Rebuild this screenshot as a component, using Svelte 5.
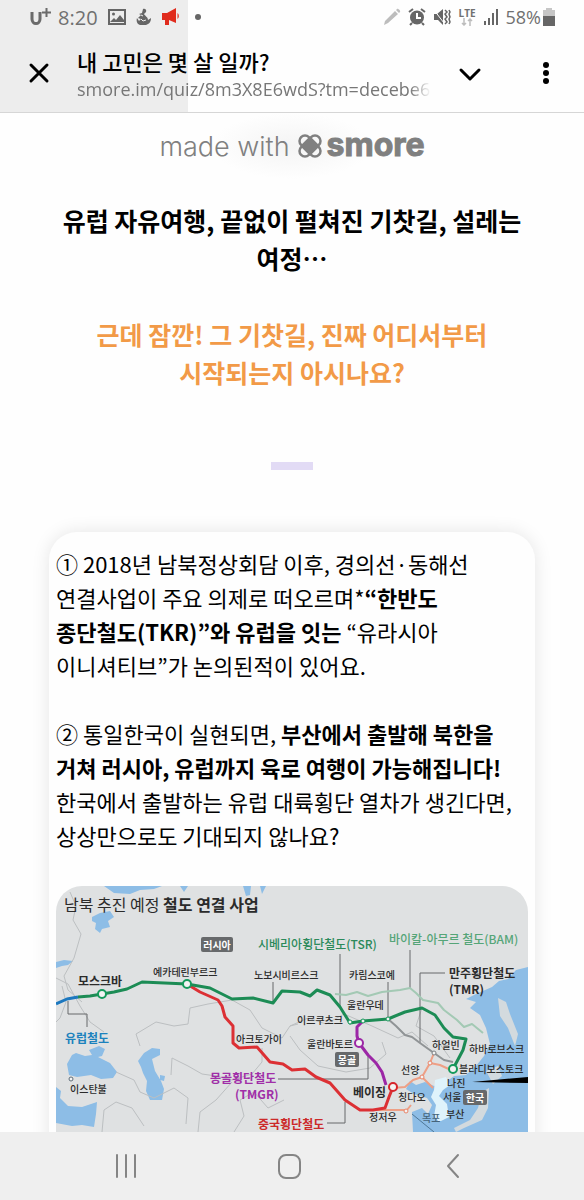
<script>
    const page = {
        title: "내 고민은 몇 살 일까?",
        url: "smore.im/quiz/8m3X8E6wdS?tm=decebe69",
        loaded: 32.2
    };

    const borders = [
        "M14 6 20 20 17 34 25 48 18 72 8 90 12 104 26 116",
        "M0 92 12 98 24 120 34 136 48 146",
        "M6 100 10 116 4 132 0 136",
        "M84 160 80 148 100 136 118 140 132 138 134 122 152 118 176 114 194 124 206 142 226 152 234 140 242 138",
        "M115 189 116 172 132 180 146 188 160 190 176 194 196 188 206 176 206 162",
        "M60 186 78 194 84 206 98 212 118 202 132 212 130 238",
        "M46 246 48 224 60 216 76 222 88 240",
        "M142 246 144 226 160 214 176 196",
        "M178 246 188 230 184 214 198 206 212 222 228 214",
        "M234 150 244 164 262 180 290 186 314 182 330 168 326 156",
        "M234 140 252 132 270 138 288 128 316 140 342 152 356 146 372 160",
        "M366 122 360 140 378 150 394 172"
    ];

    const routes = [
        { kind: "guide", d: "M12 115V128H31V141 M217 96V118 M284 68V122 M354 64V103 M332 96V133 M389 87H364V157 M222 193H312V169 M271 237H289V216" },
        { kind: "bam", d: "M279 108 290 109 301 106 312 110 326 106 344 104 354 102 360 107 367 114 382 117 388 124 401 134 408 141 416 138 427 147" },
        { kind: "tmr", d: "M332 133 340 140 349 149 356 151 364 157 378 167 388 174 397 176" },
        { kind: "korea", d: "M337 202 349 201 357 194 366 191 374 177 378 167 M374 177 384 179 397 185 M366 191 377 202 M317 224 351 224 355 219" },
        { kind: "tmgr", d: "M306 136 301 141 301 150 303 157 312 169 320 177 326 186 330 199" },
        { kind: "tcr", d: "M131 98 144 106 162 114 166 120 169 131 177 140 177 157 183 162 201 161 214 176 227 178 236 184 249 183 260 191 274 197 289 214 304 224 317 224 329 222 333 211 337 201" },
        { kind: "europe", d: "M0 118 11 113 22 111" },
        { kind: "tsr", d: "M22 111 34 110 46 108 58 106 71 103 86 96 131 98 154 102 176 113 197 112 217 117 226 105 244 106 254 110 261 104 274 109 284 121 294 137 307 135 332 133 349 126 366 122 379 129 388 142 397 151 410 153 407 164 397 183" }
    ];

    const stops = [
        { x: 46, y: 108, r: 4, color: "#159a5b" },
        { x: 131, y: 98, r: 4, color: "#159a5b" },
        { x: 303, y: 157, r: 4, color: "#9c27a6" },
        { x: 337, y: 201, r: 4, color: "#d6252b" },
        { x: 397, y: 183, r: 4, color: "#159a5b" },
        { x: 294, y: 136, r: 2, color: "#159a5b" },
        { x: 307, y: 135, r: 2, color: "#159a5b" },
        { x: 332, y: 133, r: 2, color: "#159a5b" },
        { x: 378, y: 167, r: 2, color: "#7d8184" },
        { x: 374, y: 177, r: 2, color: "#e98468" },
        { x: 366, y: 191, r: 2, color: "#e98468" },
        { x: 350, y: 225, r: 2, color: "#e98468" },
        { x: 15, y: 193, r: 2, color: "#5e6d78" }
    ];

    const labels = [
        { x: 202, y: 63, text: "시베리아횡단철도(TSR)", kind: "line green" },
        { x: 333, y: 58, text: "바이칼-아무르 철도(BAM)", kind: "line lime" },
        { x: 393, y: 92, text: "만주횡단철도", kind: "line" },
        { x: 393, y: 108, text: "(TMR)", kind: "line" },
        { x: 9, y: 157, text: "유럽철도", kind: "line blue" },
        { x: 154, y: 197, text: "몽골횡단철도", kind: "line purple" },
        { x: 179, y: 213, text: "(TMGR)", kind: "line purple" },
        { x: 202, y: 243, text: "중국횡단철도", kind: "line red" },
        { x: 22, y: 100, text: "모스크바", kind: "line" },
        { x: 297, y: 211, text: "베이징", kind: "line" },
        { x: 97, y: 90, text: "예카테린부르크" },
        { x: 198, y: 93, text: "노보시비르스크" },
        { x: 293, y: 93, text: "카림스코예" },
        { x: 291, y: 123, text: "울란우데" },
        { x: 241, y: 138, text: "이르쿠츠크" },
        { x: 251, y: 162, text: "울란바토르" },
        { x: 376, y: 163, text: "하얼빈" },
        { x: 413, y: 167, text: "하바로브스크" },
        { x: 403, y: 187, text: "블라디보스토크" },
        { x: 345, y: 188, text: "선양" },
        { x: 391, y: 201, text: "나진" },
        { x: 387, y: 215, text: "서울" },
        { x: 390, y: 232, text: "부산" },
        { x: 366, y: 236, text: "목포", kind: "faint" },
        { x: 342, y: 215, text: "칭다오" },
        { x: 313, y: 235, text: "정저우" },
        { x: 14, y: 207, text: "이스탄불" },
        { x: 180, y: 157, text: "아크토가이" }
    ];

    const countries = [
        { x: 145, y: 51, width: 32, text: "러시아" },
        { x: 279, y: 166, width: 24, text: "몽골" },
        { x: 407, y: 204, width: 24, text: "한국" }
    ];
</script>

<div class="screen">
    <header style:background-size="{page.loaded}% 100%">
        <div class="status">
            <svg width="23" height="20" viewBox="0 0 23 20" aria-label="U+">
                <path d="M3 5v7a3.500 4 0 0 0 8 0V5" fill="none" stroke="#6b6b6b" stroke-width="3" />
                <path d="M17.500 1v9M13 5.500h9" stroke="#6b6b6b" stroke-width="2" />
            </svg>
            <span class="clock">8:20</span>
            <svg class="picture" width="18" height="18" viewBox="0 0 18 18">
                <path fill="#666" fill-rule="evenodd" d="M0 1h18v16H0zM2 3v12h14V3z" />
                <circle cx="5.500" cy="6" r="1.500" fill="#666" />
                <path d="m2 14 4-4 2 2 4-5 4 5v2z" fill="#666" />
            </svg>
            <svg class="app" width="15" height="18" viewBox="0 0 15 18">
                <path fill="#666" d="M7 1c2-1 4 1 3 3L8 6c1 2 4 3 4 6l3-2c0 4-2 6-5 7H4c-3-1-4-4-3-7l2 3 2-2-3-1 3-3-2-1 3-1z" />
                <path d="m5 11 2 2 3-1M5 7l2 1" stroke="#eee" fill="none" />
            </svg>
            <svg class="horn" width="19" height="18" viewBox="0 0 19 18">
                <path fill="#e02b1d" d="M0 5h5l9-5v15l-7-3v5H3v-5H0z" />
                <path fill="#e02b1d" d="M15.500 5a4 4 0 0 1 0 6z" />
            </svg>
            <i class="more"></i>
            <div class="system">
                <svg width="18" height="18" viewBox="0 0 18 18">
                    <path fill="#bdbdbd" d="m1 17 1-4L12 3l3 3L5 15zM13 2l1-1c1-1 4 2 3 3l-1 1z" />
                </svg>
                <svg width="18" height="18" viewBox="0 0 18 18">
                    <circle cx="9" cy="9.500" r="7" fill="#666" />
                    <path d="M1 4l4-3M17 4l-4-3M4 15l-2 2M14 15l2 2" stroke="#666" stroke-width="2" />
                    <path d="M9 5v5h4" fill="none" stroke="#fff" stroke-width="2" />
                </svg>
                <svg width="18" height="18" viewBox="0 0 18 18">
                    <path fill="#666" d="M1 6h3l6-5v16l-5-5H1z" />
                    <path d="m1 2 10 13" stroke="#fff" />
                    <path d="m12 2 2 2-2 2 2 3-2 2 2 3-2 2M16 2l1 2-1 2 1 3-1 2 1 3-1 2" fill="none" stroke="#666" stroke-width="1.500" />
                </svg>
                <span class="network">
                    LTE
                    <svg width="12" height="8" viewBox="0 0 12 8">
                        <path d="M3 0v7M1 5l2 2 2-2M9 8V1M7 3l2-2 2 2" fill="none" stroke="#bdbdbd" stroke-width="1.500" />
                    </svg>
                </span>
                <svg width="16" height="18" viewBox="0 0 16 18">
                    <path d="M2 13v4M6 10v7M10 5v12M14 1v16" stroke="#666" stroke-width="2" />
                </svg>
                <span class="battery">
                    58%
                    <svg width="12" height="18" viewBox="0 0 12 18">
                        <path fill="#c6c6c6" d="M3 0h6v2h3v6H0V2h3z" />
                        <path fill="#666" d="M0 8h12v10H0z" />
                    </svg>
                </span>
            </div>
        </div>

        <div class="toolbar">
            <button aria-label="닫기">
                <svg width="22" height="22" viewBox="0 0 22 22">
                    <path d="m3 3 16 16M19 3 3 19" stroke="#000" stroke-width="3" stroke-linecap="round" />
                </svg>
            </button>
            <div class="address">
                <h1>{page.title}</h1>
                <p>{page.url}</p>
            </div>
            <button aria-label="펼치기">
                <svg width="24" height="22" viewBox="0 0 24 22">
                    <path d="m3 8 9 9 9-9" fill="none" stroke="#000" stroke-width="3" stroke-linecap="round" stroke-linejoin="round" />
                </svg>
            </button>
            <button class="menu" aria-label="메뉴">
                <svg width="10" height="24" viewBox="0 0 10 24">
                    <circle cx="5" cy="4" r="3" />
                    <circle cx="5" cy="12" r="3" />
                    <circle cx="5" cy="20" r="3" />
                </svg>
            </button>
        </div>
    </header>

    <main>
        <div class="brand">
            <span>made with</span>
            <svg width="26" height="26" viewBox="0 0 26 26" fill="none" stroke="#808080" stroke-width="2.500">
                <circle cx="8" cy="8" r="5.500" />
                <circle cx="18" cy="8" r="5.500" />
                <circle cx="8" cy="18" r="5.500" />
                <circle cx="18" cy="18" r="5.500" />
                <path d="m13 5 8 8-8 8-8-8z" fill="#808080" stroke-linejoin="round" />
            </svg>
            <strong>smore</strong>
        </div>

        <h2>유럽 자유여행, 끝없이 펼쳐진 기찻길, 설레는 여정…</h2>
        <h2 class="question">근데 잠깐! 그 기찻길, 진짜 어디서부터 시작되는지 아시나요?</h2>

        <div class="divider"></div>

        <article>
            <p>
                ① 2018년 남북정상회담 이후, 경의선·동해선 <br />
                연결사업이 주요 의제로 떠오르며*<b>“한반도</b><br />
                <b>종단철도(TKR)”와 유럽을 잇는</b> “유라시아<br />
                이니셔티브”가 논의된적이 있어요.
            </p>
            <p>
                ② 통일한국이 실현되면, <b>부산에서 출발해 북한을</b><br />
                <b>거쳐 러시아, 유럽까지 육로 여행이 가능해집니다!</b><br />
                한국에서 출발하는 유럽 대륙횡단 열차가 생긴다면, 상상만으로도 기대되지 않나요?
            </p>

            <svg class="map" viewBox="0 0 472 300" role="img" aria-label="남북 추진 예정 철도 연결 사업">
                <rect width="472" height="300" fill="#dfe1e2" />

                <g class="water">
                    <path d="M48 0 58 7 74 8 84 4 98 3 106 0zM124 0l4 6 4-6zM187 0l3 10 4-1 1-9zM204 0l2 8 4-8z" />
                    <path d="m36 31 8-4 10-2 4 6-6 4 2 6-8 2-2 4-5-4 1-6-4-2z" />
                    <path d="M0 76 8 74 17 75 12 79 6 80 0 82z" />
                    <path d="m11 178 5-9 4-2 9 3 7-1-3-5 10-4 6 3-3 7-4 1 12 6 7 9-4 6-12 1-10-4-14 2-8-2z" />
                    <path d="m82 175 6-8 8-5 8 1v6l-8 4 3 12 6 10 3 8-2 11H94l-4-9 1-10-4-8-2-6z" />
                    <path d="m104 189 5 1-1 5-4-1z" />
                    <path d="m0 201 5 4-1 7 8 8 14 1 15-5-1 12-2 13-12-2-10 1-16-3z" />
                    <path d="M472 81 460 84 452 93 443 95 436 101 420 108 410 113 420 116 414 122 424 129 430 142 434 158 428 170 420 180 410 189 398 190 390 196 378 200 369 196 360 199 354 195 350 203 358 208 371 212 376 219 372 228 366 222 356 226 357 246 362 300H472z" />
                </g>
                <path class="korea-land" d="m379 194 11-3 4 8-7 5-4 6 8 8 2 13-10 5-5-6 2-11-5-8 3-7z" />
                <path class="land" d="m442 112 8 4 4 12 8 20-3 12-7-18-8-12z" />
                <path class="land" d="m430 185 12-5 4 10-9 8zM426 206l7-4-1 20-6 12-18 8-8 4-2-4 16-8 8-12z" />

                <g class="borders">
                    {#each borders as d}
                        <path {d} />
                    {/each}
                </g>

                {#each routes as route}
                    <path class="route {route.kind}" d={route.d} />
                {/each}
                <path d="m416 196 56-5v6z" />
                <path d="m356 228 22 18" stroke="#4f7796" />

                {#each stops as stop}
                    <circle cx={stop.x} cy={stop.y} r={stop.r} fill="#f3f3f3" stroke={stop.color} stroke-width={stop.r / 2} />
                {/each}

                {#each countries as country}
                    <rect x={country.x} y={country.y} width={country.width} height="15" rx="2" fill="#67696b" />
                    <text class="country" x={country.x + country.width / 2} y={country.y + 12}>{country.text}</text>
                {/each}

                {#each labels as label}
                    <text class={label.kind} x={label.x} y={label.y}>{label.text}</text>
                {/each}
                <text class="caption" x="8" y="25">남북 추진 예정 <tspan>철도 연결 사업</tspan></text>
            </svg>
        </article>
    </main>

    <nav>
        <button aria-label="최근 앱">
            <svg width="24" height="28" viewBox="0 0 24 28">
                <path d="M3 3v22M12 3v22M21 3v22" />
            </svg>
        </button>
        <button aria-label="홈">
            <svg width="28" height="28" viewBox="0 0 28 28">
                <rect x="4" y="3" width="21" height="23" rx="7" />
            </svg>
        </button>
        <button aria-label="뒤로">
            <svg width="20" height="28" viewBox="0 0 20 28">
                <path d="M16 3 6 14l10 11" />
            </svg>
        </button>
    </nav>
</div>

<style>
    :global(body) {
        margin: 0;
        background: #fefefe;
    }

    .screen {
        display: flex;
        flex-direction: column;
        height: 100vh;
        overflow: hidden;
        color: #000;
        font-family: "Noto Sans CJK KR", sans-serif;
        word-break: keep-all;
    }

    svg {
        display: block;
        flex-shrink: 0;
    }

    button {
        display: flex;
        align-items: center;
        justify-content: center;
        padding: 0;
        border: none;
        background: none;
        cursor: pointer;
    }

    header {
        flex-shrink: 0;
        border-bottom: 1px solid #d6d6d6;
        background: linear-gradient(#ededed, #ededed) no-repeat #fefefe;
    }

    .status {
        display: flex;
        align-items: center;
        height: 34px;
        padding: 0 29px;
        color: #707070;
    }

    .clock,
    .battery {
        font-family: "Open Sans", sans-serif;
        font-size: 20px;
        font-weight: 400;
    }

    .clock {
        margin-left: 6px;
    }

    .picture {
        margin-left: 10px;
    }

    .app {
        margin-left: 10px;
    }

    .horn {
        margin-left: 11px;
    }

    .more {
        width: 6px;
        height: 6px;
        margin-left: 14px;
        border-radius: 50%;
        background: #666;
    }

    .system {
        display: flex;
        align-items: center;
        gap: 7px;
        margin-left: auto;
    }

    .network {
        display: flex;
        flex-direction: column;
        align-items: center;
        font: 700 10px/10px "Open Sans", sans-serif;
    }

    .battery {
        display: flex;
        align-items: center;
        gap: 2px;
        font-size: 18px;
    }

    .toolbar {
        display: flex;
        align-items: center;
        height: 78px;
        padding: 0 33px 0 28px;
    }

    .address {
        flex: 1;
        min-width: 0;
        margin: 0 27px;
        padding-top: 4px;
    }

    .address h1,
    .address p {
        margin: 0;
        overflow: hidden;
        line-height: 28px;
        white-space: nowrap;
    }

    .address h1 {
        font-size: 22px;
        font-weight: 500;
    }

    .address p {
        color: #777;
        font-family: "Open Sans", sans-serif;
        font-size: 18px;
        mask-image: linear-gradient(to right, #000 94%, transparent);
    }

    .menu {
        margin-left: 59px;
    }

    main {
        flex: 1;
        min-height: 0;
        padding: 0 49px;
        overflow-y: auto;
        scrollbar-width: none;
    }

    .brand {
        display: flex;
        align-items: center;
        justify-content: center;
        height: 66px;
        margin-bottom: 22px;
        background: radial-gradient(closest-side, #f4f4f4, transparent) no-repeat center / 160px 66px;
        color: #808080;
        font-family: Inter, sans-serif;
    }

    .brand span {
        margin-right: 7px;
        font-size: 27px;
        font-weight: 300;
    }

    .brand strong {
        margin: 0 0 4px 4px;
        font-size: 32px;
        font-weight: 700;
        -webkit-text-stroke: 1px #808080;
    }

    h2 {
        margin: 0 0 38px;
        font-size: 25px;
        font-weight: 700;
        line-height: 38px;
        text-align: center;
    }

    .question {
        color: #f29a47;
    }

    .divider {
        width: 42px;
        height: 8px;
        margin: 71px auto 62px;
        background: #e2dbf5;
    }

    article {
        padding: 14px 7px;
        border-radius: 28px;
        background: #fefefe;
        box-shadow: 0 0 18px rgba(0, 0, 0, 0.1);
    }

    article p {
        margin: 0 0 34px;
        font-size: 22px;
        line-height: 34px;
    }

    .map {
        width: 100%;
        border-radius: 26px;
    }

    .map text {
        fill: #2b2b2b;
        font-size: 10px;
        font-weight: 500;
    }

    .map .line {
        font-size: 12px;
        font-weight: 700;
    }

    .map .green {
        fill: #2b8a5a;
        font-weight: 500;
    }

    .map .lime {
        fill: #55a578;
        font-weight: 500;
    }

    .map .blue {
        fill: #1c82bd;
    }

    .map .purple {
        fill: #a02fa8;
    }

    .map .red {
        fill: #cc2a2a;
    }

    .map .faint {
        fill: #46657c;
    }

    .map .country {
        fill: #fff;
        font-weight: 700;
        text-anchor: middle;
    }

    .map .caption {
        font-size: 16px;
        font-weight: 400;
    }

    .caption tspan {
        font-weight: 700;
    }

    .water {
        fill: #8dbde6;
    }

    .land {
        fill: #d3dade;
    }

    .korea-land {
        fill: #dff3fb;
    }

    .borders {
        fill: none;
        stroke: #bcbfc1;
    }

    .route {
        fill: none;
        stroke-width: 3;
        stroke-linejoin: round;
    }

    .guide {
        stroke: #66696b;
        stroke-width: 1;
    }

    .bam {
        stroke: #a3c9b4;
        stroke-width: 2;
    }

    .tmr {
        stroke: #909496;
        stroke-width: 2;
    }

    .korea {
        stroke: #ee9f85;
        stroke-width: 2;
    }

    .tmgr {
        stroke: #9c27a6;
    }

    .tcr {
        stroke: #dc3034;
    }

    .europe {
        stroke: #1d78bf;
    }

    .tsr {
        stroke: #1c8c55;
    }

    nav {
        display: grid;
        flex-shrink: 0;
        grid-template-columns: repeat(3, 1fr);
        height: 68px;
        padding: 0 51px 0 44px;
        background: #efefef;
    }

    nav svg {
        fill: none;
        stroke: #858585;
        stroke-width: 2;
        stroke-linecap: round;
        stroke-linejoin: round;
    }
</style>
